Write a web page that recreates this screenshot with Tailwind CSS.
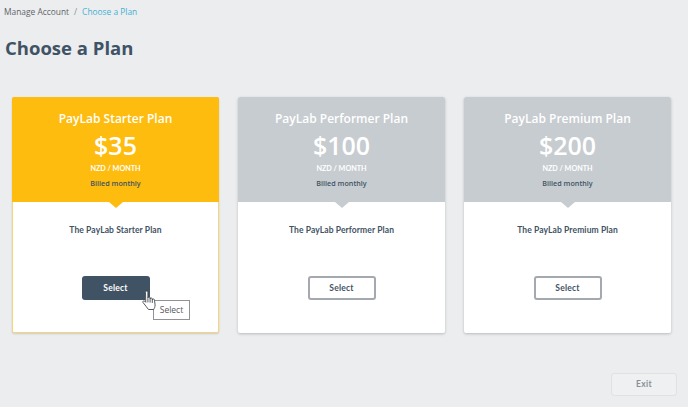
<!DOCTYPE html>
<html><head><meta charset="utf-8"><script src="https://cdn.jsdelivr.net/npm/@tailwindcss/browser@4"></script></head>
<body class="m-0">
<div class="w-[688px] h-[407px] overflow-hidden bg-[#ecedef] font-['Open_Sans',sans-serif] flex flex-col">
  <nav class="flex items-center h-[12px] mt-[6px] pl-[4px] text-[8.4px] leading-[12px] text-[#5f6468]">
    <span>Manage Account</span><span class="mx-[5px] text-[#8a8f94]">/</span><span class="text-[#45b0d2]">Choose a Plan</span>
  </nav>
  <h1 class="mt-[16px] pl-[5px] text-[18.5px] leading-[28px] font-bold text-[#3f5364]">Choose a Plan</h1>
  <div class="flex gap-[19px] pl-[12px] mt-[35px]">
    <section class="relative w-[207px] h-[236px] bg-white border border-[#f8d675] rounded-[2px] shadow-[0_1px_2px_rgba(0,0,0,0.15)] flex flex-col items-center">
      <header class="relative w-[207px] -mx-px -mt-px h-[105px] bg-[#fdbc0e] rounded-t-[2px] flex flex-col items-center text-white">
        <h2 class="mt-[13px] text-[12px] leading-[18px] font-semibold">PayLab Starter Plan</h2>
        <p class="mt-[1px] text-[25px] leading-[32px] font-semibold">$35</p>
        <p class="mt-[3px] text-[7.2px] leading-[10px] font-bold font-['Lato',sans-serif]">NZD / MONTH</p>
        <p class="mt-[4px] text-[7.2px] leading-[10px] font-semibold text-[#3f5364]">Billed monthly</p>
        <span class="absolute top-full left-1/2 -translate-x-1/2 border-x-[7px] border-t-[6px] border-x-transparent border-t-[#fdbc0e]"></span>
      </header>
      <p class="mt-[22px] text-[8.5px] leading-[12px] font-bold text-[#3f5364] font-['Lato',sans-serif] tracking-[0.1px]">The PayLab Starter Plan</p>
      <button class="mt-[40px] w-[68px] h-[24px] pt-px rounded-[3px] bg-[#3f5364] text-white text-[8.5px] font-bold font-['Lato',sans-serif] tracking-[0.2px]">Select</button>
      <div class="absolute left-[140px] top-[202px] w-[37px] h-[20px] bg-white border border-[#8f9396] flex items-center justify-center text-[8.5px] text-[#55595d]">Select</div>
      <svg class="absolute left-[129px] top-[192px]" width="15" height="20" viewBox="0 0 15 20" fill="none" stroke="#44484c" stroke-width=".9" stroke-linejoin="round" stroke-linecap="round"><path fill="#fff" d="M3.500 2.200a1.200 1.200 0 0 1 2.400 0V8a1.100 1.100 0 0 1 2.200 0v1a1.100 1.100 0 0 1 2.200.2v.8a1.100 1.100 0 0 1 2.200.3l.6 4.700c0 2-.8 3-1.400 4.500H6.500C5 17.500 3 15 1 12.500c-.7-1.200.8-2.200 1.800-1.300l.7.800z"/><path d="M5.900 8.500v3.500M8.100 9v3.200M10.300 10v2.500"/></svg>
    </section>
    <section class="relative w-[207px] h-[236px] bg-white rounded-[2px] shadow-[0_1px_3px_rgba(0,0,0,0.22)] flex flex-col items-center">
      <header class="relative w-full h-[105px] bg-[#c7ccd0] rounded-t-[2px] flex flex-col items-center text-white">
        <h2 class="mt-[13px] text-[12px] leading-[18px] font-semibold">PayLab Performer Plan</h2>
        <p class="mt-[1px] text-[25px] leading-[32px] font-semibold">$100</p>
        <p class="mt-[3px] text-[7.2px] leading-[10px] font-bold font-['Lato',sans-serif]">NZD / MONTH</p>
        <p class="mt-[4px] text-[7.2px] leading-[10px] font-semibold text-[#3f5364]">Billed monthly</p>
        <span class="absolute top-full left-1/2 -translate-x-1/2 border-x-[7px] border-t-[6px] border-x-transparent border-t-[#c7ccd0]"></span>
      </header>
      <p class="mt-[22px] text-[8.5px] leading-[12px] font-bold text-[#3f5364] font-['Lato',sans-serif] tracking-[0.1px]">The PayLab Performer Plan</p>
      <button class="mt-[40px] w-[68px] h-[24px] pt-px rounded-[3px] bg-white border-2 border-[#a3a9ae] text-[#3f5364] text-[8.5px] font-bold font-['Lato',sans-serif] tracking-[0.2px]">Select</button>
    </section>
    <section class="relative w-[207px] h-[236px] bg-white rounded-[2px] shadow-[0_1px_3px_rgba(0,0,0,0.22)] flex flex-col items-center">
      <header class="relative w-full h-[105px] bg-[#c7ccd0] rounded-t-[2px] flex flex-col items-center text-white">
        <h2 class="mt-[13px] text-[12px] leading-[18px] font-semibold">PayLab Premium Plan</h2>
        <p class="mt-[1px] text-[25px] leading-[32px] font-semibold">$200</p>
        <p class="mt-[3px] text-[7.2px] leading-[10px] font-bold font-['Lato',sans-serif]">NZD / MONTH</p>
        <p class="mt-[4px] text-[7.2px] leading-[10px] font-semibold text-[#3f5364]">Billed monthly</p>
        <span class="absolute top-full left-1/2 -translate-x-1/2 border-x-[7px] border-t-[6px] border-x-transparent border-t-[#c7ccd0]"></span>
      </header>
      <p class="mt-[22px] text-[8.5px] leading-[12px] font-bold text-[#3f5364] font-['Lato',sans-serif] tracking-[0.1px]">The PayLab Premium Plan</p>
      <button class="mt-[40px] w-[68px] h-[24px] pt-px rounded-[3px] bg-white border-2 border-[#a3a9ae] text-[#3f5364] text-[8.5px] font-bold font-['Lato',sans-serif] tracking-[0.2px]">Select</button>
    </section>
  </div>
  <div class="flex justify-end pr-[11px] mt-[40px]">
    <button class="w-[66px] h-[23px] rounded-[3px] bg-[#eff0f2] border border-[#dfe1e3] text-[#8a8f94] text-[8.5px] font-bold font-['Lato',sans-serif] tracking-[0.3px]">Exit</button>
  </div>
</div>
</body></html>
